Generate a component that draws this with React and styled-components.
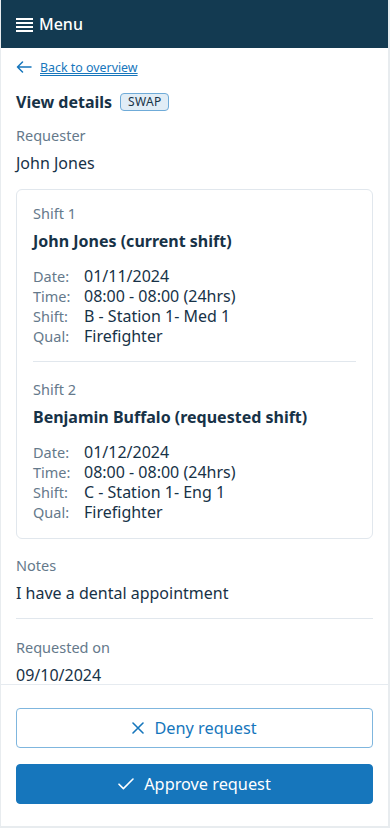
import React from 'react';
import styled, { createGlobalStyle } from 'styled-components';

const colors = {
  navy: '#133a51',
  ink: '#173247',
  muted: '#65798b',
  blue: '#1676bc',
  blueLight: '#7fb6de',
  line: '#e1e7ed',
};

const shifts = [
  {
    title: 'Shift 1',
    name: 'John Jones (current shift)',
    rows: [
      ['Date:', '01/11/2024'],
      ['Time:', '08:00 - 08:00 (24hrs)'],
      ['Shift:', 'B - Station 1- Med 1'],
      ['Qual:', 'Firefighter'],
    ],
  },
  {
    title: 'Shift 2',
    name: 'Benjamin Buffalo (requested shift)',
    rows: [
      ['Date:', '01/12/2024'],
      ['Time:', '08:00 - 08:00 (24hrs)'],
      ['Shift:', 'C - Station 1- Eng 1'],
      ['Qual:', 'Firefighter'],
    ],
  },
];

const MenuIcon = () => (
  <svg width="17" height="14" viewBox="0 0 17 14" fill="none">
    <path d="M0 1h17M0 5h17M0 9h17M0 13h17" stroke="#fff" strokeWidth="1.8" />
  </svg>
);

const ArrowLeft = () => (
  <svg width="16" height="12" viewBox="0 0 16 12" fill="none">
    <path
      d="M15 6H1.5M6.5 1 1.5 6l5 5"
      stroke={colors.blue}
      strokeWidth="1.5"
      strokeLinecap="round"
      strokeLinejoin="round"
    />
  </svg>
);

const CloseIcon = () => (
  <svg width="12" height="12" viewBox="0 0 12 12" fill="none">
    <path d="M1 1l10 10M11 1 1 11" stroke={colors.blue} strokeWidth="1.6" strokeLinecap="round" />
  </svg>
);

const CheckIcon = () => (
  <svg width="16" height="12" viewBox="0 0 16 12" fill="none">
    <path
      d="M1 6.2 5.4 10.6 15 1"
      stroke="#fff"
      strokeWidth="1.6"
      strokeLinecap="round"
      strokeLinejoin="round"
    />
  </svg>
);

const App = () => (
  <>
    <GlobalStyle />
    <Frame>
      <Header>
        <MenuIcon />
        <HeaderTitle>Menu</HeaderTitle>
      </Header>
      <Content>
        <BackLink href="#">
          <ArrowLeft />
          <span>Back to overview</span>
        </BackLink>
        <TitleRow>
          <Title>View details</Title>
          <Badge>SWAP</Badge>
        </TitleRow>
        <Field gap="13px">
          <Label>Requester</Label>
          <Value>John Jones</Value>
        </Field>
        <Card>
          {shifts.map((shift, i) => (
            <ShiftBlock key={shift.title} divided={i > 0}>
              <Label>{shift.title}</Label>
              <ShiftName>{shift.name}</ShiftName>
              <Details>
                {shift.rows.map(([k, v]) => (
                  <React.Fragment key={k}>
                    <DetailKey>{k}</DetailKey>
                    <DetailValue>{v}</DetailValue>
                  </React.Fragment>
                ))}
              </Details>
            </ShiftBlock>
          ))}
        </Card>
        <Field gap="16px" divided>
          <Label>Notes</Label>
          <Value>I have a dental appointment</Value>
        </Field>
        <Field gap="18px">
          <Label>Requested on</Label>
          <Value>09/10/2024</Value>
        </Field>
      </Content>
      <Footer>
        <Button variant="outline">
          <CloseIcon />
          Deny request
        </Button>
        <Button>
          <CheckIcon />
          Approve request
        </Button>
      </Footer>
    </Frame>
  </>
);

const GlobalStyle = createGlobalStyle`
  html, body {
    margin: 0;
    padding: 0;
    background: #fff;
  }
  body {
    font-family: "Noto Sans", "Open Sans", sans-serif;
    color: ${colors.ink};
  }
`;

const Frame = styled.div`
  width: 390px;
  height: 828px;
  box-sizing: border-box;
  display: flex;
  flex-direction: column;
  overflow: hidden;
  border-left: 1px solid #e8ecef;
  border-right: 2px solid #e8ecef;
  border-bottom: 2px solid #e8ecef;
`;
const Header = styled.header`
  height: 48px;
  flex: none;
  margin-left: -1px;
  background: ${colors.navy};
  display: flex;
  align-items: center;
  gap: 6px;
  padding: 0 16px;
  svg {
    margin-top: 1px;
  }
`;
const HeaderTitle = styled.span`
  color: #fff;
  font-size: 16px;
  font-weight: 500;
`;
const Content = styled.main`
  flex: 1;
  overflow: hidden;
  padding: 8px 15px 0;
`;
const BackLink = styled.a`
  display: inline-flex;
  align-items: center;
  gap: 8px;
  color: ${colors.blue};
  font-size: 12.4px;
  line-height: 17px;
  span {
    text-decoration: underline;
    text-underline-offset: 3px;
  }
`;
const TitleRow = styled.div`
  display: flex;
  align-items: center;
  gap: 8px;
  margin-top: 14px;
`;
const Title = styled.h1`
  margin: 0;
  font-size: 16px;
  line-height: 20px;
  font-weight: 700;
  color: ${colors.ink};
`;
const Badge = styled.span`
  font-size: 12px;
  line-height: 16px;
  padding: 0 7px;
  border: 1px solid #6fabd8;
  border-radius: 4px;
  background: #e1edf6;
  color: ${colors.ink};
  letter-spacing: 0.3px;
`;
const Field = styled.section`
  padding: ${({ gap }) => gap} 0 ${({ divided }) => (divided ? '15px' : '0')};
  border-bottom: ${({ divided }) => (divided ? `1px solid ${colors.line}` : 'none')};
`;
const Label = styled.div`
  font-size: 14.5px;
  color: ${colors.muted};
  line-height: 20px;
`;
const Value = styled.div`
  margin-top: 8px;
  font-size: 16px;
  line-height: 20px;
  color: ${colors.ink};
`;
const Card = styled.div`
  margin: 16px 0 0;
  border: 1px solid ${colors.line};
  border-radius: 6px;
  padding: 0 16px;
`;
const ShiftBlock = styled.div`
  padding: ${({ divided }) => (divided ? '17px 0 16px' : '13px 0 15px')};
  border-top: ${({ divided }) => (divided ? `1px solid ${colors.line}` : 'none')};
`;
const ShiftName = styled.div`
  margin-top: 8px;
  font-size: 16px;
  line-height: 20px;
  font-weight: 700;
  color: ${colors.ink};
`;
const Details = styled.dl`
  margin: 15px 0 0;
  display: grid;
  grid-template-columns: 51px 1fr;
`;
const DetailKey = styled.dt`
  font-size: 14.5px;
  line-height: 20px;
  color: ${colors.muted};
`;
const DetailValue = styled.dd`
  margin: 0;
  font-size: 16px;
  line-height: 20px;
  color: ${colors.ink};
`;
const Footer = styled.footer`
  flex: none;
  border-top: 1px solid #e6ebf0;
  padding: 23px 15px 22px;
  display: flex;
  flex-direction: column;
  gap: 16px;
`;
const Button = styled.button`
  height: 40px;
  border-radius: 4px;
  display: flex;
  align-items: center;
  justify-content: center;
  gap: 10px;
  font-family: inherit;
  font-size: 16.3px;
  cursor: pointer;
  border: 1px solid ${({ variant }) => (variant === 'outline' ? colors.blueLight : colors.blue)};
  background: ${({ variant }) => (variant === 'outline' ? '#fff' : colors.blue)};
  color: ${({ variant }) => (variant === 'outline' ? colors.blue : '#fff')};
`;

export default App;
